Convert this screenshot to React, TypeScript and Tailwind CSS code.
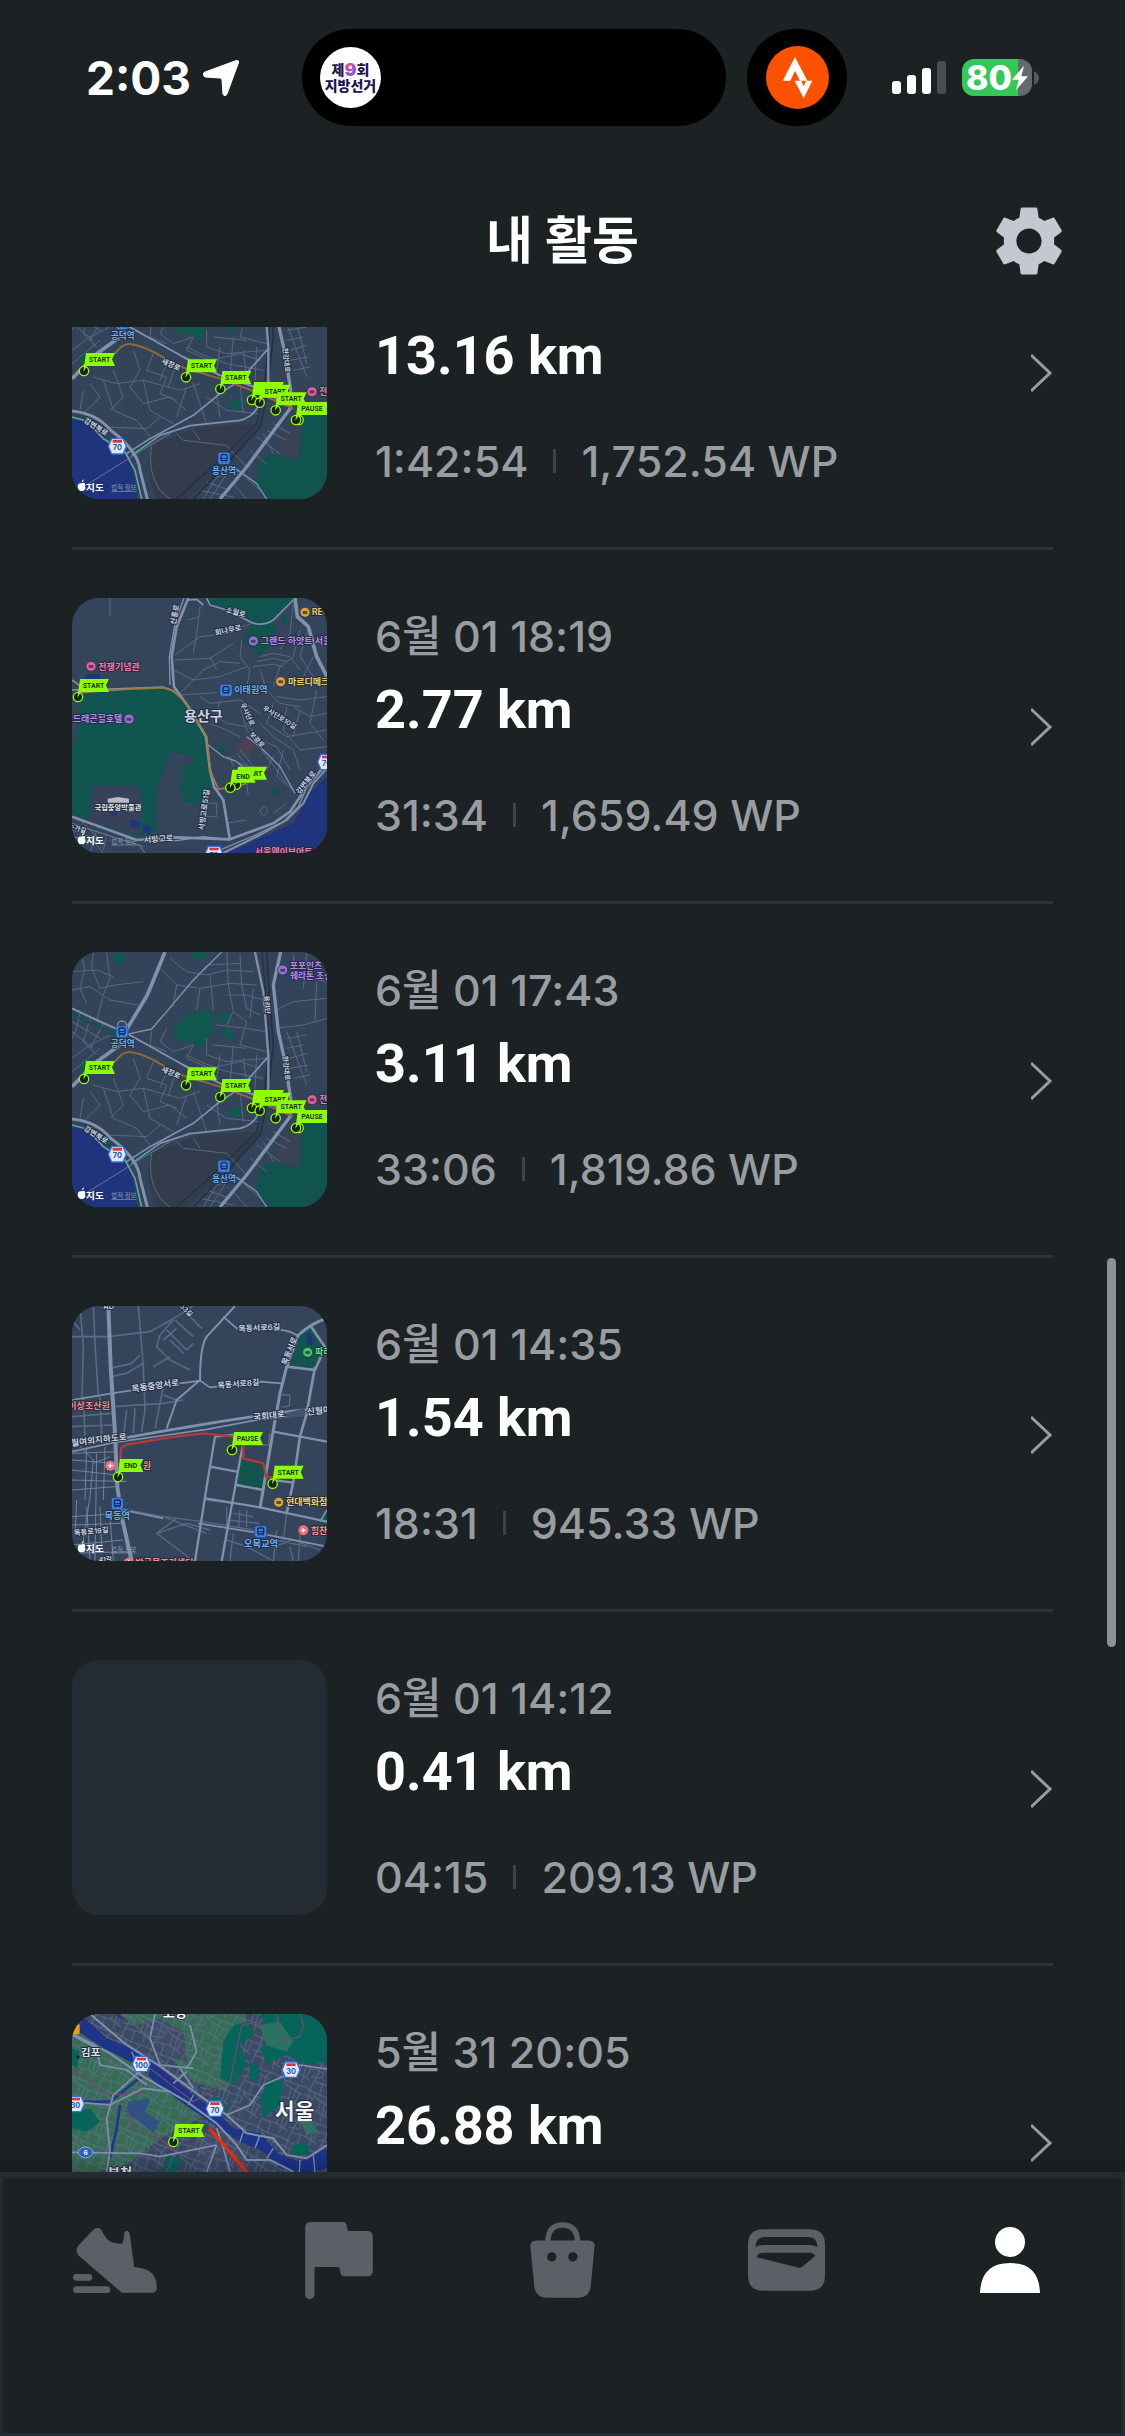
// App.tsx
// Activity history screen: status bar, header, scrollable list and bottom tabs

import { useLayoutEffect, useRef } from 'react'
import type { ReactNode } from 'react'
import { MdSettings } from 'react-icons/md'

type MapName = 'yongsan' | 'itaewon' | 'mokdong' | 'seoul'

interface Activity {
  id: string
  date?: string
  distance: string
  duration?: string
  points?: string
  map?: MapName
}

const activities: Activity[] = [
  { id: 'a1', distance: '13.16 km', duration: '1:42:54', points: '1,752.54 WP', map: 'yongsan' },
  { id: 'a2', date: '6월 01 18:19', distance: '2.77 km', duration: '31:34', points: '1,659.49 WP', map: 'itaewon' },
  { id: 'a3', date: '6월 01 17:43', distance: '3.11 km', duration: '33:06', points: '1,819.86 WP', map: 'yongsan' },
  { id: 'a4', date: '6월 01 14:35', distance: '1.54 km', duration: '18:31', points: '945.33 WP', map: 'mokdong' },
  { id: 'a5', date: '6월 01 14:12', distance: '0.41 km', duration: '04:15', points: '209.13 WP' },
  { id: 'a6', date: '5월 31 20:05', distance: '26.88 km', map: 'seoul' },
]

// ---------- Map pieces ----------

function Minor({ d, width = 3, color = '#586984' }: { d: string; width?: number; color?: string }) {
  return <path d={d} fill="none" stroke={color} strokeWidth={width} strokeLinejoin="round" />
}

function Major({ d, width = 8 }: { d: string; width?: number }) {
  return <path d={d} fill="none" stroke="#8091ae" strokeWidth={width} strokeLinejoin="round" />
}

interface LabelProps {
  x: number
  y: number
  children: ReactNode
  size?: number
  color?: string
  rotate?: number
  anchor?: 'start' | 'middle'
}

function Label({ x, y, children, size = 24, color = '#c9d4e6', rotate = 0, anchor = 'middle' }: LabelProps) {
  return (
    <text
      x={x}
      y={y}
      fontSize={size}
      fontWeight={600}
      fill={color}
      stroke="#1f2937"
      strokeWidth={5}
      paintOrder="stroke"
      textAnchor={anchor}
      transform={`rotate(${rotate} ${x} ${y})`}
    >
      {children}
    </text>
  )
}

function Pin({ x, y, text = '', width = 87 }: { x: number; y: number; text?: string; width?: number }) {
  return (
    <g>
      <circle cx={x} cy={y} r={14} fill="#1b2023" stroke="#8cff00" strokeWidth={4} />
      <path
        d={`M${x - 2} ${y + 2} L${x + 6} ${y - 54} H${x + 6 + width} L${x + width - 3} ${y - 35} L${x + 6 + width} ${y - 15} H${x + 9} Z`}
        fill="#8cff00"
      />
      <text
        x={x + 3 + width / 2}
        y={y - 27}
        fontSize={21}
        fontWeight={600}
        fill="#1b2a10"
        textAnchor="middle"
        className="[font-family:Roboto,sans-serif]"
      >
        {text}
      </text>
    </g>
  )
}

function Poi({ x, y, color, r = 15 }: { x: number; y: number; color: string; r?: number }) {
  return (
    <g>
      <circle cx={x} cy={y} r={r} fill={color} stroke="#1f2937" strokeWidth={2} />
      <rect x={x - 7} y={y - 4} width={14} height={9} rx={2} fill="#2b2440" opacity={0.7} />
    </g>
  )
}

function Cross({ x, y }: { x: number; y: number }) {
  return (
    <g>
      <circle cx={x} cy={y} r={15} fill="#ee6d7f" />
      <path d={`M${x - 7} ${y} h14 M${x} ${y - 7} v14`} stroke="#fff" strokeWidth={4} />
    </g>
  )
}

function Station({ x, y }: { x: number; y: number }) {
  return (
    <g>
      <rect x={x - 18} y={y - 18} width={36} height={36} rx={7} fill="#3f82e6" stroke="#1b3f86" strokeWidth={2} />
      <rect x={x - 9} y={y - 11} width={18} height={18} rx={4} fill="none" stroke="#12284f" strokeWidth={4} />
      <path d={`M${x - 8} ${y + 12} l4 -5 M${x + 8} ${y + 12} l-4 -5 M${x - 7} ${y} h14`} stroke="#12284f" strokeWidth={3} />
    </g>
  )
}

function Shield({ x, y, text }: { x: number; y: number; text: string }) {
  return (
    <g>
      <path
        d={`M${x - 17} ${y - 23} h34 l10 23 l-10 23 h-34 l-10 -23 Z`}
        fill="#dfe7f5"
        stroke="#2f72dc"
        strokeWidth={4}
        strokeLinejoin="round"
      />
      <rect x={x - 14} y={y - 19} width={28} height={8} fill="#d5383c" />
      <text x={x} y={y + 12} fontSize={22} fontWeight={700} fill="#2457b5" textAnchor="middle">
        {text}
      </text>
    </g>
  )
}

// Apple logo and legal link, bottom left of every map
function Attribution({ y }: { y: number }) {
  return (
    <g>
      <path
        d={`M65 ${y - 17} q1 -8 7 -9 q0 7 -7 9 Z M64 ${y - 14} q8 -5 12 2 q-5 6 1 12 q-4 9 -8 9 q-5 -2 -9 0 q-6 -2 -7 -13 q1 -12 11 -10 Z`}
        fill="#fff"
      />
      <text x={78} y={y + 8} fontSize={29} fontWeight={700} fill="#fff">
        지도
      </text>
      <text x={154} y={y + 7} fontSize={19} fill="#8c98ab" textDecoration="underline">
        법적 정보
      </text>
    </g>
  )
}

// ---------- Maps ----------

function YongsanMap() {
  return (
    <svg viewBox="36 21 765 765" className="size-full" aria-hidden="true">
      <rect x="36" y="21" width="765" height="765" fill="#33435a" />
      <path d="M36 535 Q110 545 150 600 Q215 640 225 700 L250 786 H36 Z" fill="#0f5650" />
      <path d="M36 548 L70 552 L120 590 L150 625 L205 660 L222 720 L232 786 H36 Z" fill="#1f347c" />
      <path d="M380 210 L440 194 L460 220 L466 262 L432 275 L436 298 L415 308 L394 292 L345 285 L342 250 Z" fill="#11584f" />
      <path d="M470 208 L510 206 L504 228 L474 232 Z M510 490 H546 V516 H510 Z M482 250 L510 246 L530 290 L486 270 Z M160 25 L195 30 L190 60 L165 52 Z M400 21 L438 21 L436 46 L410 40 L384 52 Z M62 350 L80 345 V375 L64 380 Z" fill="#11584f" />
      <path d="M801 535 L728 535 L714 670 L640 650 L600 668 L586 735 L625 786 H801 Z" fill="#10534f" />
      <path d="M690 540 L728 540 L714 665 L650 640 Z" fill="#3a4356" />
      <path d="M275 625 L420 570 L600 560 L520 670 L380 786 L290 786 Q250 700 275 625 Z" fill="#323c4c" />

      <Minor
        d="M60 21 L75 70 L60 130 L80 175 M100 21 L95 70 L120 130 L165 120 L250 110 M36 80 L110 75 L160 95 M36 135 L90 125 L150 165 L235 180 M140 21 L150 100 L130 150 L110 228 M36 230 L120 280 M36 260 L100 310 M60 205 L50 250 L36 280 M90 220 L70 290 L110 330 M130 238 L90 310 M36 340 L90 300 L150 270 M36 380 L120 310"
      />
      <Minor
        d="M300 70 L350 120 L420 130 L510 115 L590 120 M330 40 L380 80 L440 90 L500 75 L580 80 M350 120 L340 180 L290 230 M420 130 L410 195 M450 90 L460 195 M500 21 L505 120 L520 200 L500 240 M540 30 L545 120 L560 190 L600 210 M400 110 L440 60 L540 55 M500 150 L560 150 L610 165 M520 200 L560 230 L540 300 L620 320 M580 130 L570 220 M470 240 L560 250 L615 260 M440 280 L440 330 L500 350 L620 340 M460 300 L560 310 M400 300 L380 340 L450 370 L540 350 L600 370 M480 330 L470 400 M520 300 L510 420 M550 340 L560 420 M590 330 L585 430 M380 330 L420 350 L500 380 L610 400 M320 250 L300 290 L340 320 L400 300 M275 255 L270 300 L320 320"
      />
      <Minor
        d="M100 420 L170 440 L250 430 L360 460 L420 440 M90 440 L120 480 L70 530 M130 430 L160 520 L230 550 L270 600 M220 340 L240 400 L210 450 L250 500 L330 480 L380 520 M260 400 L320 420 L300 470 L350 490 M320 380 L300 430 M345 390 L325 450 M160 400 L190 480 L150 520 M250 430 L270 520 L340 560 M380 450 L350 540 M280 350 L260 400 M400 440 L420 500 L440 560 M440 480 L500 520 L600 530 M470 470 L480 540 M540 440 L550 530 M70 460 L60 520 M140 570 L260 575 L300 540"
      />
      <Minor
        d="M640 200 L700 170 L801 160 M650 250 L730 240 L801 220 M740 21 L730 130 M700 30 L705 90 L801 110 M770 110 L765 230 M680 280 L740 270 M680 310 L730 300 M690 340 L740 325 M690 370 L745 360 M700 400 L750 390 M680 260 L740 420 M710 260 L740 380 M430 786 L470 720 L540 700 M450 786 L500 710 M420 760 L520 780 M440 735 L510 760 M520 740 L560 786 M545 710 L600 760 M590 600 L660 650 M610 590 L640 650 M570 640 L620 680 M640 560 L690 590 M620 580 L680 610 M275 625 Q260 700 300 760 L330 786 M350 590 L370 610 L500 625 L560 690 M400 580 L420 610"
      />
      <Minor d="M620 21 L630 180 L640 300 L620 480 L600 570 L500 680 L400 786" color="#26303f" width={5} />
      <Minor d="M606 21 L618 160 L628 300 L610 470 L590 560 L490 660 L350 786" color="#26303f" width={4} />
      <Minor d="M36 208 L150 262 L200 285" color="#12544e" width={7} />
      <Minor d="M225 645 L270 622" color="#12544e" width={16} />
      <Minor d="M50 762 L270 625 L330 590" color="#6b7890" />

      <Major d="M315 21 L262 150 L205 245 L180 300 L110 350 L36 425" width={11} />
      <Major d="M36 190 L110 225 L200 265 L290 315 L370 360 L480 415 L600 455 L690 510" width={6} />
      <Major d="M485 21 L400 105 L320 200 L275 252 L200 268" width={4} />
      <Major d="M585 21 L610 140 L625 330 L625 450" width={7} />
      <Major d="M662 21 L640 120 L655 260 L675 350 L692 460 L690 515 L560 690 L480 786" width={10} />
      <Major d="M625 335 L540 430 L480 470 L400 535 L270 605 L200 650" width={5} />
      <Major d="M600 470 Q600 535 540 550 L390 566 L300 595 L215 655" width={5} />
      <Major d="M36 522 Q110 530 150 578 Q235 640 240 700 L262 786" width={9} />
      <Major d="M36 540 L80 552 L130 605 L195 645 L225 700 L245 786" width={5} />
      <Major d="M520 690 L590 740 L620 786" width={4} />
      <path d="M165 350 Q190 315 215 322 Q260 330 310 362 L370 392 L480 425 L580 462 L700 515" fill="none" stroke="#8f6a35" strokeWidth={6} />

      <Label x={614} y={180} size={20} rotate={86}>용리단</Label>
      <Label x={672} y={370} size={20} rotate={84}>한강대로</Label>
      <Label x={330} y={390} size={22} rotate={24}>새창로</Label>
      <Label x={104} y={576} size={22} rotate={32}>강변북로</Label>
      <circle cx="186" cy="242" r="14" fill="none" stroke="#8395b3" strokeWidth="4" />
      <Station x={186} y={260} />
      <Label x={188} y={305} size={26} color="#6aaef5">공덕역</Label>
      <Station x={492} y={664} />
      <Label x={492} y={710} size={26} color="#6aaef5">용산역</Label>
      <Shield x={172} y={628} text="70" />
      <Poi x={668} y={75} color="#9a6fd6" />
      <Label x={690} y={72} size={26} color="#b98af5" anchor="start">포포인츠</Label>
      <Label x={690} y={101} size={26} color="#b98af5" anchor="start">쉐라톤 조선</Label>
      <Poi x={756} y={464} color="#e0629f" />
      <Label x={778} y={473} size={26} color="#f07cb4" anchor="start">전쟁</Label>
      <Attribution y={753} />

      <Pin x={72} y={402} text="START" />
      <Pin x={378} y={421} text="START" />
      <Pin x={481} y={456} text="START" />
      <Pin x={576} y={489} width={90} />
      <Pin x={599} y={497} text="START" />
      <Pin x={647} y={520} text="START" />
      <Pin x={716} y={549} />
      <Pin x={708} y={549} text="PAUSE" width={90} />
    </svg>
  )
}

function ItaewonMap() {
  return (
    <svg viewBox="36 24 765 765" className="size-full" aria-hidden="true">
      <rect x="36" y="24" width="765" height="765" fill="#34445b" />
      <path d="M60 305 L310 292 L350 310 L400 370 L438 440 L450 540 L455 590 L425 640 L370 635 L360 600 L370 525 L398 522 V498 L330 488 L290 600 L290 730 L240 740 L36 675 V460 L50 450 Z" fill="#105550" />
      <path d="M100 586 L243 590 V735 L200 725 L85 690 Z" fill="#38415a" />
      <path d="M440 24 H700 L640 90 L600 105 L560 85 L480 55 L445 45 Z M575 105 L640 95 L650 145 L600 195 L545 150 Z M670 75 L682 80 L676 102 L662 95 Z M475 475 L498 472 L495 495 L478 492 Z M628 598 H654 V614 H628 Z" fill="#10534f" />
      <path d="M801 560 L750 610 L700 700 L600 745 L500 789 H801 Z" fill="#1f347c" />
      <path d="M560 435 L588 450 L565 505 L530 475 Z" fill="#4b4353" />
      <path d="M75 255 L120 250 L118 285 L100 268 L78 280 Z M210 690 L240 695 V712 H212 Z M248 700 L275 715 L270 735 L250 725 Z M150 668 h20 v8 h-20 Z" fill="#1f347c" />

      <Minor d="M150 24 V80 M345 195 L420 140 L500 130 L575 100 M420 50 L410 130 L400 190 M385 90 L420 80 M345 210 L450 205 L520 160 M340 240 L400 270 L480 260 L560 230 M360 310 L430 240 L480 215 L540 220 M360 315 L470 308 M450 200 L470 240 M545 150 L540 200 L570 240 L560 290 L600 310 M420 320 L450 340 L540 330 L600 370" />
      <Minor d="M600 200 L640 190 L690 200 L720 240 M590 215 L640 205 L680 215 M580 230 L640 222 L670 232 M600 240 L620 300 L660 340 L720 350 M720 120 L700 200 L660 230 L640 290 M700 40 L690 130 L660 180 M740 130 L720 200 L760 260 M760 200 L730 260 L700 290 M650 320 L720 330 L801 320 M700 350 L750 380 L801 370 M770 300 L750 400 L790 450 M640 340 L620 400 L680 440 L801 420 M680 350 L670 420 L720 480 L801 470 M720 360 L700 440 M600 400 L640 440 L700 480 L720 540 M560 400 L600 450 L650 470 L690 540 M540 350 L560 420 L620 500 L680 580 M480 330 L470 380 L500 400 L560 410 M450 400 L500 420 L540 440 M500 500 L540 520 L600 540 M510 500 L520 530 M530 490 L560 525 M540 480 L580 530 M640 500 L620 540 M670 480 L650 560 L700 600 M560 580 L565 615 M600 660 Q620 635 622 665 Q610 690 600 660 M640 670 L680 640 M440 640 H470 V680 H440 Z M36 720 L90 740 L130 789 M60 690 L130 760 M110 720 L90 789 M140 735 L130 780 M500 700 L560 690" />
      <Minor d="M36 700 L110 725 L250 770 M36 740 L120 760 M240 770 L255 789" color="#6f819d" />

      <Major d="M385 24 L350 110 L335 200 L342 290 L385 350 L438 440 L450 540 L462 590 L490 630 L510 750" width={8} />
      <Major d="M372 24 L345 100 L328 200 L330 285" width={4} />
      <Major d="M385 30 L410 28 L430 45 M36 300 L145 297 L310 291 L345 305 M36 270 L70 295" width={5} />
      <Major d="M440 24 L450 45 L500 60 L560 90 Q600 115 640 90 L700 30" width={5} />
      <Major d="M705 24 L712 80 L745 110 L770 200 L801 260" width={11} />
      <Major d="M445 465 L490 500 L530 515 L570 550 M560 440 L600 470 L660 530 L705 610" width={4} />
      <Major d="M36 680 L230 750 L350 742 L510 748 L640 700 L690 665 L740 590 L801 520" width={8} />
      <Major d="M490 789 L600 735 L680 690 L730 640 L760 580 L801 535" width={6} />
      <Major d="M470 784 L580 738 L670 695 L715 650 L750 570" width={4} />
      <Minor d="M250 755 L350 752 L430 740 L500 748" color="#8395b3" width={4} />
      <path d="M60 308 L190 298 L310 293 Q350 300 385 350 L440 440 L450 540 L475 597 L530 590 L560 580" fill="none" stroke="#a67c35" strokeWidth={5} />

      <Label x={352} y={75} rotate={-80} size={22}>신흥로</Label>
      <Label x={525} y={74} rotate={15} size={22}>소월로</Label>
      <Label x={506} y={128} rotate={-12} size={22}>회나무로</Label>
      <Label x={556} y={376} rotate={65} size={20}>우사단로</Label>
      <Label x={655} y={388} rotate={32} size={20}>우사단로10길</Label>
      <Label x={586} y={454} rotate={48} size={20}>보광로</Label>
      <Label x={440} y={660} rotate={-82} size={22}>서빙고로51길</Label>
      <Label x={296} y={755} rotate={-4} size={24}>서빙고로</Label>
      <Label x={744} y={582} rotate={-52} size={22}>강변북로</Label>
      <Label x={50} y={722} rotate={18} size={20}>누가길</Label>
      <Label x={430} y={394} size={42} color="#cdd6e4">용산구</Label>

      <Poi x={93} y={229} color="#e0629f" />
      <Label x={115} y={239} size={27} color="#f07cb4" anchor="start">전쟁기념관</Label>
      <Label x={38} y={395} size={27} color="#b98af5" anchor="start">드래곤힐호텔</Label>
      <Poi x={207} y={387} color="#9a6fd6" />
      <Poi x={580} y={153} color="#9a6fd6" />
      <Label x={602} y={163} size={27} color="#b98af5" anchor="start">그랜드 하얏트 서울</Label>
      <Poi x={735} y={67} color="#dba43c" />
      <Label x={755} y={76} size={27} color="#f0cf66" anchor="start">REC</Label>
      <Poi x={662} y={275} color="#dba43c" />
      <Label x={684} y={284} size={27} color="#f0cf66" anchor="start">마르디메크</Label>
      <Station x={498} y={301} />
      <Label x={523} y={310} size={27} color="#6aaef5" anchor="start">이태원역</Label>
      <path d="M143 638 v-12 l32 -5 l32 5 v12 Z" fill="#b7bcc4" />
      <Label x={174} y={661} size={22} color="#e5eaf2">국립중앙박물관</Label>
      <Shield x={800} y={516} text="70" />
      <Shield x={462} y={792} text="70" />
      <Label x={584} y={795} size={27} color="#f07cb4" anchor="start">서울웨이브아트센터</Label>
      <Attribution y={754} />

      <Pin x={54} y={321} text="START" />
      <Pin x={528} y={584} text="START" />
      <Pin x={511} y={593} text="END" width={70} />
    </svg>
  )
}

function MokdongMap() {
  return (
    <svg viewBox="36 18 765 765" className="size-full" aria-hidden="true">
      <rect x="36" y="18" width="765" height="765" fill="#34445b" />
      <path d="M748 82 L792 140 L765 205 L690 195 L715 115 Z M540 482 L615 500 L608 566 L530 550 Z M801 625 L780 680 L801 730 Z" fill="#12554f" />
      <path d="M738 100 L750 98 L762 125 L755 138 L740 125 Z" fill="#1f347c" />

      <Minor width={5} d="M36 110 H145 L270 95 L350 50 L400 18 M60 18 L70 140 L65 330 M100 18 L105 130 L115 290 M235 18 L250 200 L255 330 M36 60 L60 90 M150 205 L215 190 L240 165 M150 230 L200 220 L250 190 M300 105 L340 60 M300 105 L290 140 L330 180 L390 210 M320 90 L380 150 L400 130 M345 60 L400 110 M375 35 L425 85 M330 120 L370 160 M310 120 L350 85 M280 200 L330 170 M36 300 L150 280 L225 270 M160 320 L310 310 L370 300 M200 330 L190 410 M225 325 L220 400 M255 330 L245 395 M310 260 L285 385 M310 285 L350 300 M36 350 L155 340 M36 380 L155 375 M70 290 L75 410 M120 290 L125 410" />
      <Minor d="M36 460 L170 455 M36 480 L165 490 M36 510 L170 525 M36 540 L200 545 M60 440 L100 480 L90 590 L60 783 M80 440 L75 600 M110 460 L105 783 M135 440 L130 600 M100 490 L150 470 M36 570 L165 560 M36 650 L180 640 M36 675 L185 670 M36 735 L190 720 M36 760 L200 755 M80 620 L90 783 M120 620 L125 740 M150 650 L160 783 M50 600 L45 700" color="#71829d" />
      <Minor width={4} d="M180 625 L310 650 L430 665 L580 690 M310 650 L440 700 M350 655 L290 700 L400 783 M290 700 L380 670 L450 690 M440 600 L520 610 M500 620 L500 690 M520 640 L580 650 M540 630 L535 690 M560 630 L560 680 M500 660 L600 670 M500 720 L560 740 L640 783 M520 700 L510 783 M650 690 L640 783 M680 640 L670 720 M650 720 L740 740 M690 740 L700 783 M720 700 L715 783 M640 740 L700 720 L780 750 M690 285 L688 318 L665 322 M665 285 H690 M550 435 H625 L630 400" />

      <Major d="M145 18 L152 200 L165 400 L172 560 L185 650 L215 783" width={12} />
      <Major d="M525 18 L440 110 Q420 140 420 240 L350 300 L320 385" width={6} />
      <Major d="M160 420 L300 395 L480 365 L640 340 L801 322" width={8} />
      <Major d="M36 455 L160 428 L300 408 L440 388 L600 358 L740 345 L801 335" width={5} />
      <path d="M680 338 L735 325 L735 348 L680 355 Z" fill="#43536e" />
      <Major d="M490 50 L530 85 L600 85 Q690 85 715 110 M36 300 L220 270 L420 242 L450 262 L600 245 L665 250" width={5} />
      <Major d="M801 55 Q760 65 715 105 L680 200 L660 280 L640 390 L600 625" width={9} />
      <Major d="M750 75 L801 150 M765 200 L740 340 L720 410 L700 545 L680 640 M680 200 L765 210 L785 165" width={8} />
      <Major d="M640 395 L801 425 M465 410 L520 405 M465 410 L440 560 L405 783 M550 430 L540 480 L520 590 L485 783 M450 500 L530 515 M435 595 L600 622 L801 665 M530 555 L610 570 M640 540 L700 548" width={7} />
      <Major d="M415 670 L600 700 L801 740 M190 630 L310 655 M780 665 L801 630" width={5} />

      <path d="M180 505 L182 455 Q182 435 210 432 L330 412 L430 400 L520 410 L550 420 V475 L610 490 L618 530 L650 535" fill="none" stroke="#b23a35" strokeWidth={7} />

      <Label x={146} y={28} size={22}>AD</Label>
      <Label x={374} y={36} size={20} rotate={45}>53길</Label>
      <Label x={598} y={92} rotate={-3}>목동서로6길</Label>
      <Label x={696} y={156} rotate={-68}>목동서로</Label>
      <Label x={287} y={266} size={26} rotate={-8}>목동중앙서로</Label>
      <Label x={536} y={260} rotate={-5}>목동서로8길</Label>
      <Label x={628} y={356} size={26} rotate={-6}>국회대로</Label>
      <Label x={742} y={345} size={26} rotate={-6} anchor="start">신월여의지하도로</Label>
      <Label x={106} y={430} size={26} rotate={-7}>신월여의지하도로</Label>
      <Label x={94} y={702} size={22} rotate={-5}>목동로19길</Label>
      <Label x={136} y={785} size={20}>41길</Label>
      <Label x={25} y={326} size={27} color="#f58a8f" anchor="start">이상조산원</Label>
      <Poi x={743} y={157} color="#4fc268" />
      <Label x={765} y={166} size={27} color="#6fdc83" anchor="start">파리공원</Label>
      <Cross x={151} y={497} />
      <Label x={248} y={506} size={27} color="#f58a8f" anchor="start">원</Label>
      <Station x={172} y={611} />
      <Label x={172} y={658} size={28} color="#6aaef5">목동역</Label>
      <Station x={602} y={695} />
      <Label x={603} y={741} size={28} color="#6aaef5">오목교역</Label>
      <Poi x={656} y={607} color="#dba43c" />
      <Label x={678} y={616} size={27} color="#f0cf66" anchor="start">현대백화점</Label>
      <Cross x={730} y={691} />
      <Label x={752} y={701} size={27} color="#f58a8f" anchor="start">힘찬병원</Label>
      <Cross x={206} y={788} />
      <Label x={226} y={797} size={27} color="#f58a8f" anchor="start">박금목조리센터</Label>
      <Attribution y={748} />

      <Pin x={516} y={450} text="PAUSE" />
      <Pin x={174} y={531} text="END" width={70} />
      <Pin x={638} y={551} text="START" />
    </svg>
  )
}

function SeoulMap() {
  return (
    <svg viewBox="36 27 765 765" className="size-full" aria-hidden="true">
      <defs>
        <pattern id="blocks" width="97" height="83" patternUnits="userSpaceOnUse" patternTransform="rotate(24)">
          <path
            d="M0 9 L40 14 L97 9 M12 0 L16 40 L12 83 M30 12 V22 L56 28 L60 60 M0 30 H30 V48 L0 55 M56 28 L97 34 M75 12 L70 30 L78 83 M16 66 L60 60 L97 68 M40 62 L44 83 M44 14 V0 M86 32 L84 66"
            fill="none"
            stroke="#64769a"
            strokeWidth="2"
          />
        </pattern>
      </defs>
      <rect x="36" y="27" width="765" height="765" fill="#3b4963" />
      <path d="M36 70 L200 160 L330 240 L440 330 L300 400 L200 480 L36 520 Z M180 27 H560 L540 130 L500 260 L400 230 L300 130 Z M700 300 L750 320 L770 380 L740 390 Z" fill="#386c55" />
      <path d="M230 60 L300 40 L370 80 L380 170 L330 160 Z M420 380 H560 V500 H400 Z" fill="#414c68" />
      <rect x="36" y="27" width="765" height="765" fill="url(#blocks)" />
      <path d="M600 27 H801 V170 L740 180 L680 150 L620 175 L600 130 L640 90 Z M520 60 L570 50 L580 90 L540 120 L560 180 L520 240 L480 220 L490 110 Z M36 320 L90 310 L120 350 L80 380 L36 370 Z M36 130 L60 140 L50 190 L36 180 Z M630 220 L670 230 L660 300 L610 340 L600 280 Z M695 420 L740 415 L750 445 L700 455 Z M320 450 L360 460 L350 501 H310 Z M460 270 L490 290 L500 320 L460 330 Z M570 170 L600 190 L590 230 L570 220 Z" fill="#06655a" />
      <path d="M600 60 L660 50 L700 110 L680 140 L620 120 Z M720 320 L760 350 L770 390 L730 370 Z" fill="#2a7360" />
      <path d="M205 290 L270 280 L255 320 L300 350 L280 385 L240 350 L195 320 Z" fill="#335084" />
      <path d="M70 35 L140 100 L215 130 L300 190 L400 270 L470 320 L520 370 L600 385 L660 450 L720 470 L801 430 V490 L740 505 L660 490 L610 440 L540 410 L480 370 L390 310 L300 245 L230 180 L130 130 L55 80 Z" fill="#1d3489" />
      <path d="M170 27 L185 40 M180 300 L170 370 L150 460 M36 290 L150 290 L250 210" fill="none" stroke="#24368c" strokeWidth="8" />
      <path d="M650 27 L665 110 L720 95 L730 60 L720 27 M36 190 L90 230 L150 270 L240 265 L270 190 L400 290 L510 230 L545 60 L600 50 M200 310 L220 370 L300 400 L345 440 L320 501" fill="none" stroke="#6f4a72" strokeWidth="4" />

      <Major d="M90 27 L200 120 L310 190 L410 265 L500 330 L560 385 L640 400 L680 450 L740 460 L801 420" width={6} />
      <Major d="M36 85 L150 145 L250 215 L380 290 L470 355 L530 420 L560 465 L630 465 L700 500" width={6} />
      <Major d="M285 27 L270 100 L300 180 L400 190 M390 60 L410 140 L380 190 M120 180 L110 130 L36 90 M120 180 L200 195 L260 240 M36 290 L150 300 L250 250 L330 260 M250 190 L160 270 L140 340 L150 440 L140 501 M36 442 L240 445 L300 455 L470 420 M360 190 L400 250 M340 235 L380 200" width={5} />
      <Major d="M500 330 L570 300 L610 240 L680 210 L720 180 L801 192 M470 370 L490 430 L510 501 M470 420 L440 501" width={5} />
      <Major d="M215 140 L230 175 M400 270 L385 300 M550 380 L540 410 M600 390 L585 430 M640 430 L620 460 M720 465 L718 501 M760 450 L765 500" width={4} />
      <path d="M452 374 L570 512 L640 590" fill="none" stroke="#ff2600" strokeWidth={9} strokeLinecap="round" />

      <rect x="26" y="58" width="33" height="30" rx="5" fill="#e0a21c" />
      <Label x={345} y={36} size={40} color="#f2f5fa">고양</Label>
      <rect x="50" y="152" width="8" height="8" fill="#0d1014" />
      <Label x={92} y={152} size={32} color="#dde3ee">김포</Label>
      <Label x={704} y={342} size={64} color="#eef2f8">서울</Label>
      <Label x={180} y={518} size={40} color="#eef2f8">부천</Label>
      <Shield x={244} y={177} text="100" />
      <Shield x={693} y={194} text="30" />
      <Shield x={465} y={311} text="70" />
      <Shield x={46} y={297} text="30" />
      <ellipse cx="77" cy="442" rx="22" ry="16" fill="#2c62c9" stroke="#c6d5f2" strokeWidth="2" />
      <text x="77" y="449" fontSize="20" fontWeight="700" fill="#fff" textAnchor="middle">6</text>
      <Pin x={340} y={411} text="START" />
    </svg>
  )
}

const maps = {
  yongsan: YongsanMap,
  itaewon: ItaewonMap,
  mokdong: MokdongMap,
  seoul: SeoulMap,
}

// ---------- Status bar ----------

function StatusBar() {
  return (
    <div className="flex h-[155px] shrink-0 items-center pl-1.5 text-white">
      <div className="flex flex-1 items-center justify-end gap-3 pr-[63px]">
        <span className="text-[46px] leading-none font-bold">2:03</span>
        <svg viewBox="0 0 36 36" className="size-9" aria-hidden="true">
          <path
            d="M32 1 Q37 -1 35 4 L24 34 Q22 38 20 34 L19 20 Q19 18 17 18 L2 17 Q-2 14 2 12 Z"
            fill="#fff"
            stroke="#fff"
            strokeLinejoin="round"
          />
        </svg>
      </div>
      <div className="flex h-[97px] w-[424px] items-center rounded-full bg-black pl-[18px]">
        <div className="flex size-[61px] flex-col items-center justify-center rounded-full bg-white text-[14px] leading-4 font-black whitespace-nowrap text-[#1f1650]">
          <span className="flex items-center">
            제<span className="bg-linear-to-br from-[#f0563f] via-[#b04bd0] to-[#2463e8] bg-clip-text text-[18px] text-transparent">9</span>회
          </span>
          <span>지방선거</span>
        </div>
      </div>
      <div className="ml-[21px] flex h-[97px] w-[100px] items-center justify-center rounded-full bg-black">
        <svg viewBox="0 0 189 189" className="size-[63px]" aria-hidden="true">
          <circle cx="94.500" cy="94.500" r="94.500" fill="#fc5200" />
          <path d="M50 104 L87 33 L124 104 H102 L87 75 L73 104 Z" fill="#fff" />
          <path d="M86 104 H106 L113 121 L121 104 H139 L113 157 Z" fill="#fff" />
        </svg>
      </div>
      <div className="flex flex-1 items-center pl-[45px]">
        <div className="flex h-[33px] items-end gap-1.5">
          <span className="h-[13px] w-[9px] rounded-[3px] bg-white" />
          <span className="h-[19px] w-[9px] rounded-[3px] bg-white" />
          <span className="h-[26px] w-[9px] rounded-[3px] bg-white" />
          <span className="h-[33px] w-[9px] rounded-[3px] bg-[#4a4e51]" />
        </div>
        <div className="ml-4 flex h-[37px] w-[70px] items-center rounded-[12px] bg-linear-to-r from-[#34c759] from-80% to-[#66696c] to-80% pl-1">
          <span className="text-[34px] leading-none font-extrabold">80</span>
          <svg viewBox="0 0 48 78" className="h-[26px] w-4 shrink-0" aria-hidden="true">
            <path d="M36 2 L0 44 H20 L12 76 L48 34 H28 Z" fill="#fff" />
          </svg>
        </div>
        <svg viewBox="0 0 5 14" className="ml-0.5 h-3.5 w-[5px]" aria-hidden="true">
          <path d="M0 0 Q5 3 5 7 T0 14 Z" fill="#55595c" />
        </svg>
      </div>
    </div>
  )
}

// ---------- Activity list ----------

function ActivityRow({ activity }: { activity: Activity }) {
  const Map = activity.map ? maps[activity.map] : null

  return (
    <li className="border-b-[3px] border-[#2a333c]">
      <a href="#" className="flex items-center gap-12 py-12">
        <div className="size-[255px] shrink-0 overflow-hidden rounded-[27px] bg-[#242b33]">{Map && <Map />}</div>
        <div className="flex h-[255px] min-w-0 flex-1 flex-col py-2">
          <p className="h-[60px] text-[43px] leading-[60px] font-medium text-[#999da1]">{activity.date}</p>
          <p className="mt-2 [font-family:Roboto,sans-serif] text-[54px] leading-[72px] font-bold text-white">
            {activity.distance}
          </p>
          {activity.duration && (
            <p className="mt-auto flex items-center text-[43px] leading-[60px] font-medium text-[#999da1]">
              <span>{activity.duration}</span>
              <span className="mx-[25px] h-6 w-[3px] bg-[#3b4349]" />
              <span>{activity.points}</span>
            </p>
          )}
        </div>
        <svg viewBox="0 0 22 40" className="h-10 w-[22px] shrink-0" aria-hidden="true">
          <path d="M0 3 L19 21 L0 39" fill="none" stroke="#999da1" strokeWidth="3" />
        </svg>
      </a>
    </li>
  )
}

// ---------- Bottom tabs ----------

const tabs = [
  {
    title: '운동',
    icon: (
      <svg viewBox="36 78 251 195" className="h-[65px] w-[84px]" fill="currentColor" aria-hidden="true">
        <path d="M98 82 Q110 73 121 84 Q130 106 146 118 Q160 127 184 125 Q188 112 189 94 Q192 84 200 87 Q205 89 206 98 L219 195 Q252 199 264 207 Q286 222 287 252 V258 Q287 272 274 272 H184 Q181 272 176 267 L53 161 Q40 147 51 131 Z" />
        <rect x="36" y="216" width="57" height="20" rx="9" />
        <rect x="36" y="253" width="111" height="20" rx="9" />
      </svg>
    ),
  },
  {
    title: '챌린지',
    icon: (
      <svg viewBox="730 69 203 231" className="h-[77px] w-[68px]" fill="currentColor" aria-hidden="true">
        <path d="M747 69 H845 Q852 69 854 78 L857 92 Q858 96 864 96 H916 Q933 96 933 113 V216 Q933 232 916 232 H848 Q838 232 836 222 L833 208 Q832 204 828 204 H758 V286 Q757 300 743 300 Q730 300 730 286 V86 Q730 69 747 69 Z" />
      </svg>
    ),
  },
  {
    title: '상점',
    icon: (
      <svg viewBox="87 62 194 227" className="h-[76px] w-[65px]" fill="currentColor" aria-hidden="true">
        <path d="M140 120 Q142 71 184 71 Q227 71 229 120" fill="none" stroke="currentColor" strokeWidth="16" />
        <path
          fillRule="evenodd"
          d="M105 117 H263 Q281 118 280 134 L268 256 Q263 288 231 288 H136 Q105 288 100 256 L88 134 Q88 118 105 117 Z M138 166 a14 14 0 1 0 28 0 a14 14 0 1 0 -28 0 Z M201 166 a14 14 0 1 0 28 0 a14 14 0 1 0 -28 0 Z"
        />
      </svg>
    ),
  },
  {
    title: '지갑',
    icon: (
      <svg viewBox="745 87 232 185" className="h-[62px] w-[77px]" fill="currentColor" aria-hidden="true">
        <path
          fillRule="evenodd"
          d="M791 87 H931 Q977 87 977 133 V226 Q977 272 931 272 H791 Q745 272 745 226 V133 Q745 87 791 87 Z M768 141 Q778 134 791 134 H931 Q944 134 954 141 Q954 110 927 110 H795 Q768 110 768 141 Z M771 171 L895 202 Q904 204 910 199 L948 167 Q942 158 931 158 H791 Q775 158 771 171 Z"
        />
      </svg>
    ),
  },
  {
    title: '내 활동',
    active: true,
    icon: (
      <svg viewBox="0 0 60 66" className="h-[66px] w-[60px]" fill="currentColor" aria-hidden="true">
        <circle cx="30" cy="15" r="15" />
        <path d="M0 66 Q1 36 30 36 Q59 36 60 66 Z" />
      </svg>
    ),
  },
]

function TabBar() {
  return (
    <nav className="relative grid shrink-0 grid-cols-5 border-[3px] border-t-[6px] border-[#252b33] bg-[#1c2124] pb-[91px] shadow-[0_-6px_18px_rgba(0,0,0,0.25)]">
      {tabs.map((tab) => (
        <button
          key={tab.title}
          type="button"
          aria-label={tab.title}
          className={tab.active ? 'flex h-[164px] items-center justify-center text-white' : 'flex h-[164px] items-center justify-center text-[#5a6065]'}
        >
          {tab.icon}
        </button>
      ))}
    </nav>
  )
}

export default function App() {
  const listRef = useRef<HTMLDivElement>(null)

  useLayoutEffect(() => {
    if (listRef.current) listRef.current.scrollTop = 131
  }, [])

  return (
    <div className="flex h-screen flex-col overflow-hidden bg-[#1c2124] [font-family:Inter,'Noto_Sans_CJK_KR',sans-serif]">
      <StatusBar />

      <header className="grid h-[172px] shrink-0 grid-cols-[1fr_auto_1fr] items-center px-[54px]">
        <h1 className="col-start-2 text-[51px] leading-[72px] font-bold text-white">내 활동</h1>
        <button type="button" aria-label="설정" className="justify-self-end text-[#c5c8d0]">
          <MdSettings size={84} />
        </button>
      </header>

      <main className="relative min-h-0 flex-1">
        <div ref={listRef} className="h-full overflow-y-auto px-[72px] [scrollbar-width:none]">
          <ul>
            {activities.map((activity) => (
              <ActivityRow key={activity.id} activity={activity} />
            ))}
          </ul>
        </div>
        {/* Scroll indicator */}
        <div className="absolute top-[931px] right-[9px] h-[389px] w-[9px] rounded-full bg-[#8e9092]" />
      </main>

      <TabBar />
    </div>
  )
}
